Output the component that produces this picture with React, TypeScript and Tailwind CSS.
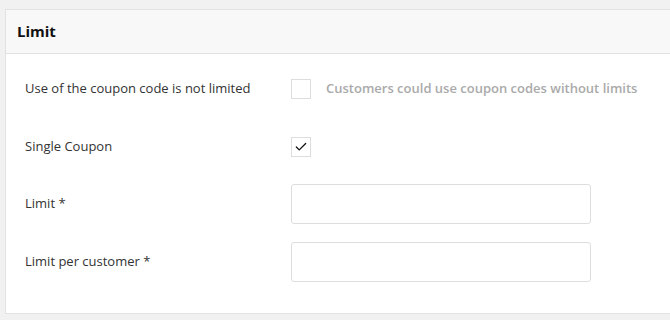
import { Check } from "lucide-react";

function Box({ checked }: { checked?: boolean }) {
  return (
    <span className="flex h-[20px] w-[20px] shrink-0 items-center justify-center border border-[#dddddd] bg-white">
      {checked && <Check className="h-[14px] w-[14px] text-[#111]" strokeWidth={2.2} />}
    </span>
  );
}

export default function App() {
  return (
    <div className="h-[320px] w-[670px] overflow-hidden bg-[#f1f1f1] pl-[5px] pt-[9px] font-['Open_Sans',sans-serif]">
      <div className="w-[700px] border border-[#e2e2e2] bg-white">
        <div className="flex h-[44px] items-center border-b border-[#e2e2e2] bg-[#f8f8f8] px-[11px]">
          <h2 className="text-[15px] font-bold text-[#111]">Limit</h2>
        </div>
        <div className="flex flex-col gap-[17.5px] pb-[31px] pl-[19px] pt-[15px] text-[13px] text-[#333]">
          <div className="flex h-[40px] items-center">
            <span className="w-[266px] shrink-0">Use of the coupon code is not limited</span>
            <Box />
            <span className="ml-[15px] font-semibold text-[#aaaaaa]">Customers could use coupon codes without limits</span>
          </div>
          <div className="flex h-[40px] items-center">
            <span className="w-[266px] shrink-0">Single Coupon</span>
            <Box checked />
          </div>
          <div className="flex h-[40px] items-center">
            <span className="w-[266px] shrink-0">Limit *</span>
            <input className="h-[40px] w-[300px] rounded-[3px] border border-[#dddddd] px-2 outline-none" />
          </div>
          <div className="flex h-[40px] items-center">
            <span className="w-[266px] shrink-0">Limit per customer *</span>
            <input className="h-[40px] w-[300px] rounded-[3px] border border-[#dddddd] px-2 outline-none" />
          </div>
        </div>
      </div>
    </div>
  );
}
